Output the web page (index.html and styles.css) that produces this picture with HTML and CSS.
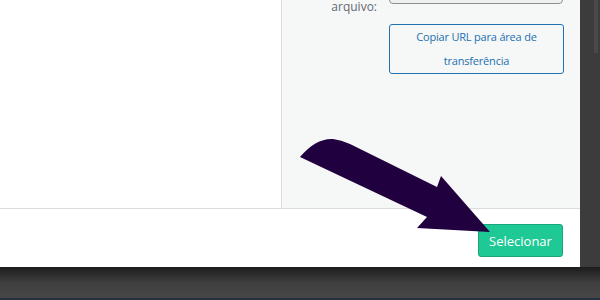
FILE: index.html
```html
<!DOCTYPE html>
<html lang="pt-BR">
<head>
    <meta charset="UTF-8">
    <title>Selecionar arquivo</title>
    <link rel="stylesheet" href="styles.css">
</head>
<body>
    <div class="page">
        <div class="modal">
            <div class="frame">
                <div class="library"></div>
                <div class="sidebar">
                    <div class="file-row">
                        <label class="file-label">URL do<br>arquivo:</label>
                        <div class="url-input"></div>
                    </div>
                    <div class="copy-row">
                        <button class="copy-btn">Copiar URL para área de transferência</button>
                    </div>
                </div>
            </div>
            <div class="toolbar">
                <button class="select-btn">Selecionar</button>
            </div>
        </div>
        <div class="under"></div>
        <div class="scrollbar"></div>

        <!-- seta de destaque por cima do modal -->
        <svg class="arrow" width="600" height="300" viewBox="0 0 600 300">
            <path d="M300 157 Q316 138 333 139 Q341 140 350 144 L437 187 L441 176 L490 232 L417 228 L427 217 Z" fill="#21003f"/>
        </svg>
    </div>
</body>
</html>
```

FILE: styles.css
```css
body {
    margin: 0;
    background-color: #3c3c3c;
    font-family: "Open Sans", "Noto Sans", sans-serif;
}
.page {
    position: relative;
    width: 600px;
    height: 300px;
    overflow: hidden;
    background-color: #3c3c3c;
}
.modal {
    width: 580px;
    height: 269px;
    background: #fff;
    display: flex;
    flex-direction: column;
}
.frame {
    display: flex;
    height: 208px;
    border-bottom: 1px solid #dcdcde;
}
.library {
    width: 281px;
    background: #fff;
    border-right: 1px solid #dcdcde;
}
.sidebar {
    flex: 1;
    background: #f6f7f7;
    overflow: hidden;
}
.file-row {
    display: flex;
    align-items: flex-start;
    gap: 12px;
    margin-top: -26px;
}
.file-label {
    width: 95px;
    text-align: right;
    font-size: 12px;
    line-height: 18px;
    color: #646970;
    margin-top: 6px;
}
.url-input {
    width: 172px;
    height: 28px;
    border: 1px solid #8c8f94;
    border-radius: 4px;
    background: #f0f0f1;
}
.copy-row {
    padding: 8px 0 0 107px;
}
.copy-btn {
    width: 175px;
    height: 50px;
    padding: 0 10px;
    border: 1px solid #2271b1;
    border-radius: 3px;
    background: #f6f7f7;
    color: #2271b1;
    font-family: "Open Sans", "Noto Sans", sans-serif;
    font-size: 11px;
    letter-spacing: -0.2px;
    line-height: 24px;
}
.toolbar {
    flex: 1;
    display: flex;
    justify-content: flex-end;
    align-items: flex-start;
    padding: 15px 17px 0 0;
}
.select-btn {
    width: 85px;
    height: 33px;
    border: 1px solid #17a57b;
    border-radius: 3px;
    background: #1fc996;
    color: #fff;
    font-family: "Open Sans", "Noto Sans", sans-serif;
    font-size: 13px;
    padding: 0;
}
.under {
    height: 31px;
    background: linear-gradient(#1c1c1c, #3f3f3f 50%, #474747);
    border-bottom: 2px solid #243240;
    margin-top: -2px;
}
.scrollbar {
    position: absolute;
    top: 0;
    left: 594px;
    width: 4px;
    height: 53px;
    background: #4a4a4a;
}
.arrow {
    position: absolute;
    top: 0;
    left: 0;
}
```
